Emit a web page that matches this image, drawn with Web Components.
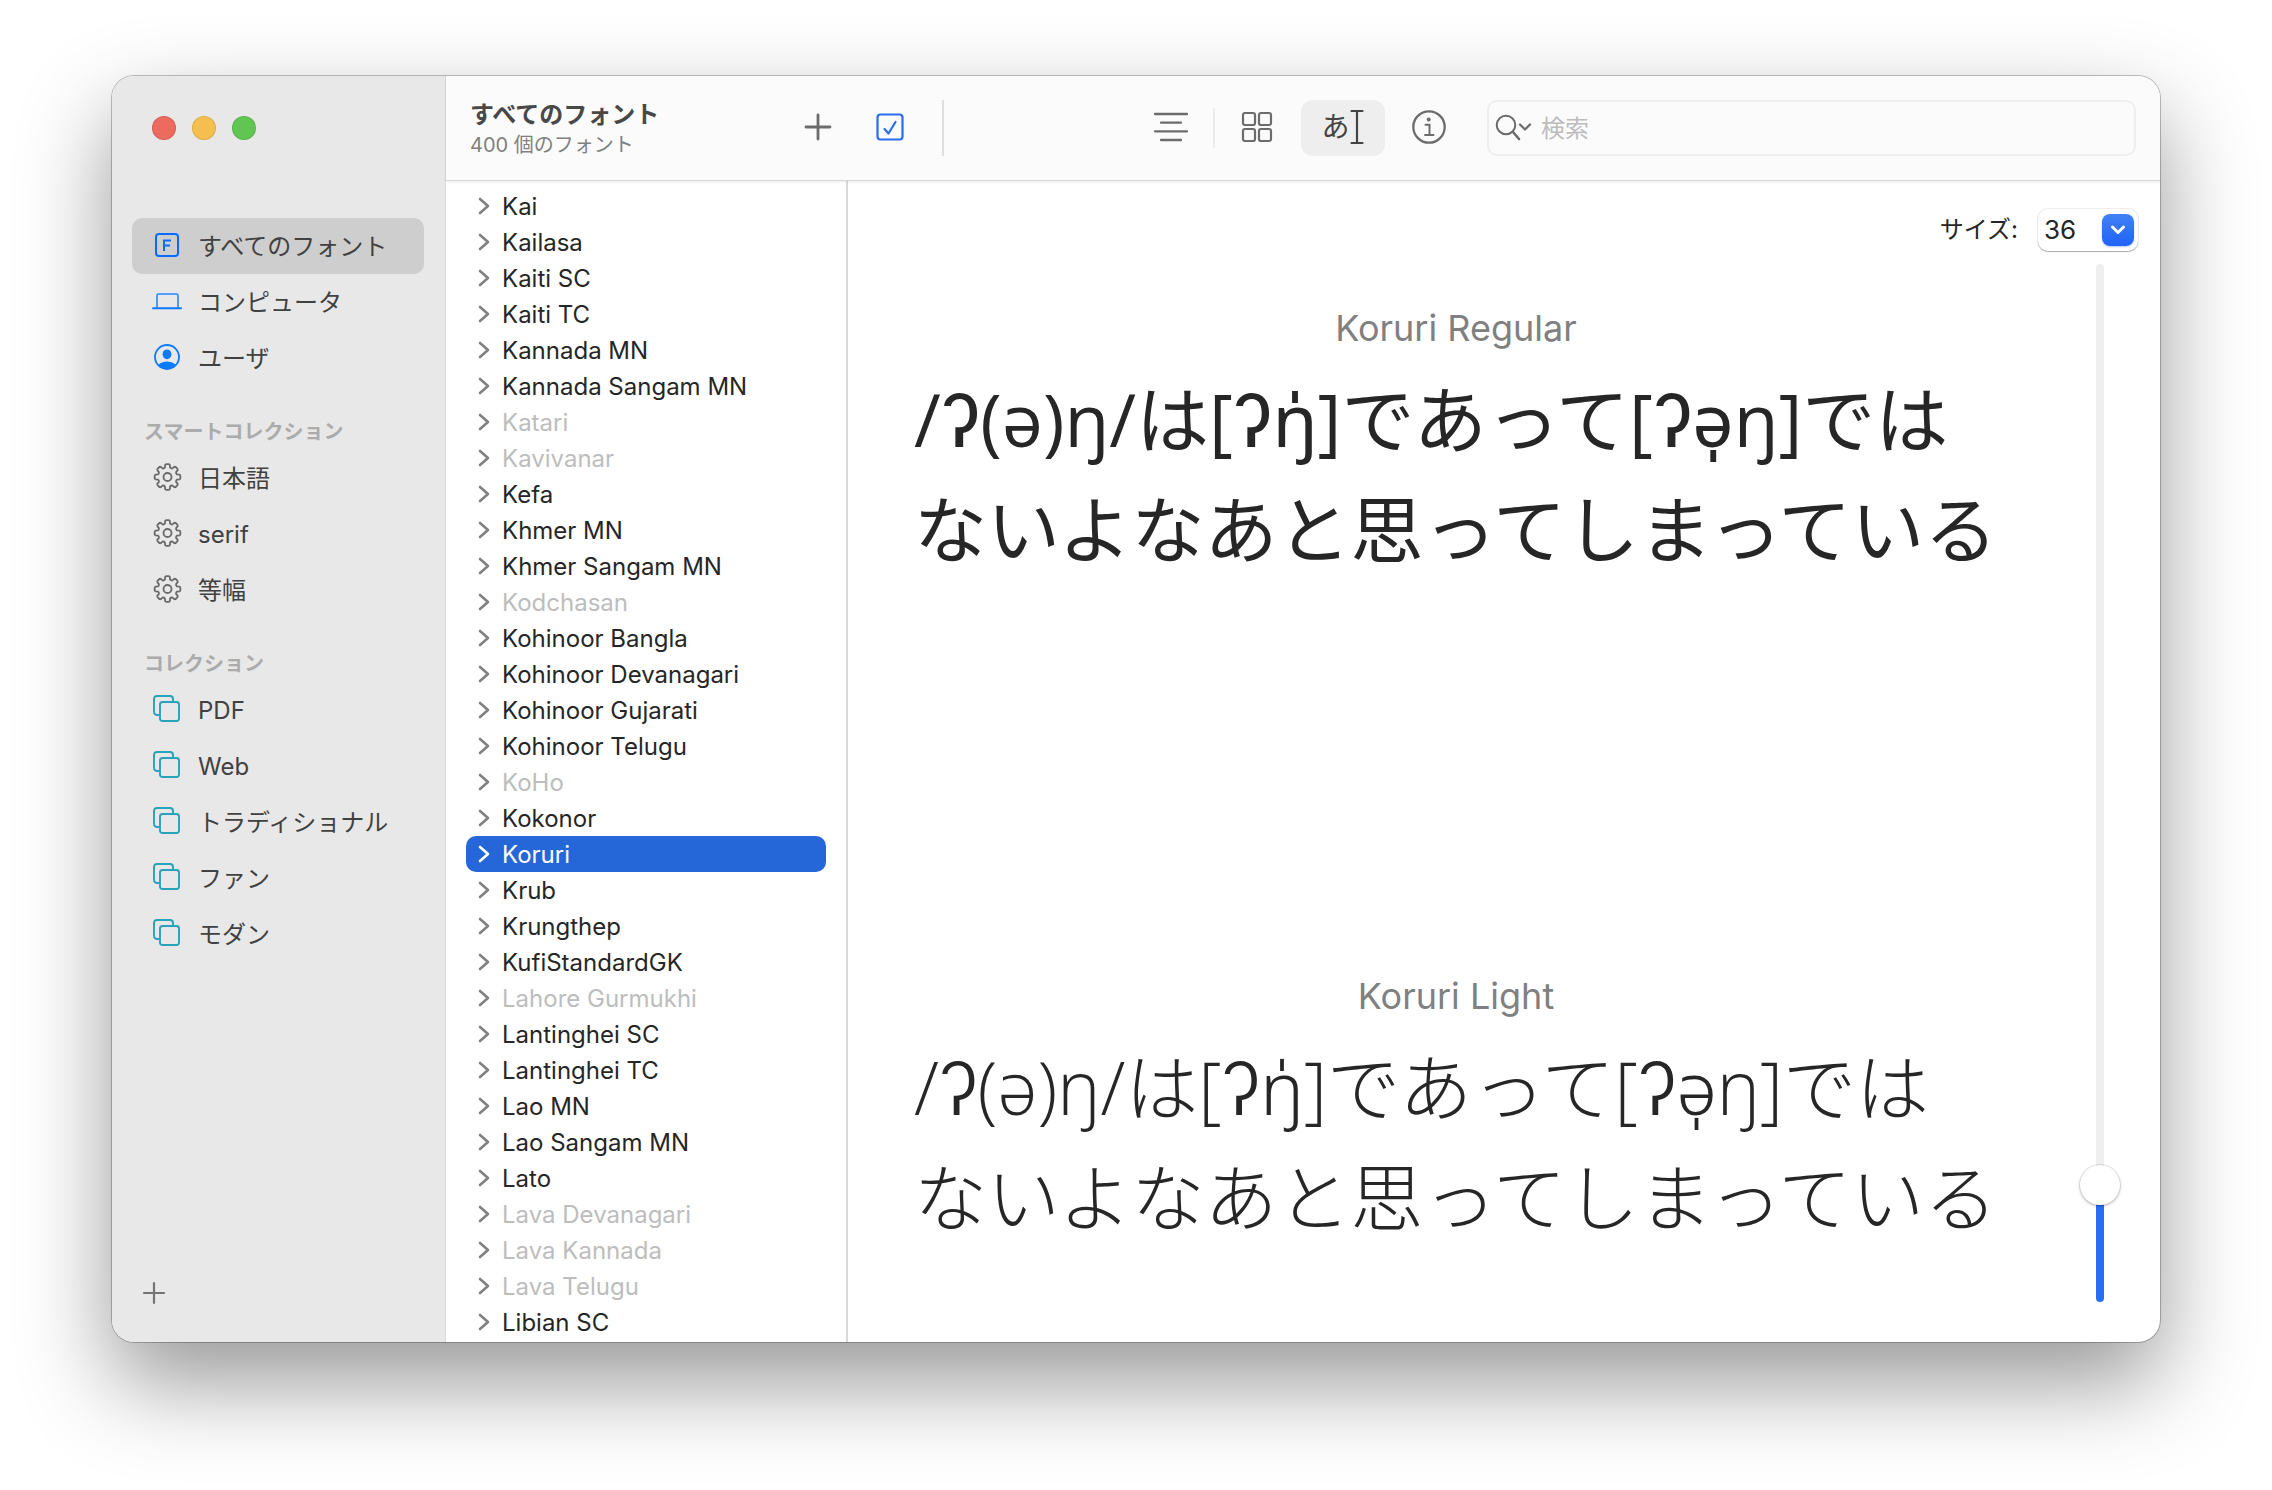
<!DOCTYPE html>
<html lang="ja">
<head>
<meta charset="utf-8">
<meta name="viewport" content="width=device-width, initial-scale=1">
<title>Font Book</title>
<style>
  html, body { margin: 0; background: #fff; }
  body {
    font-family: "Inter", "Noto Sans CJK JP", sans-serif;
    font-size: 24px;
    line-height: 32px;
    color: #262626;
  }
</style>
</head>
<body>
<fb-window>
  <fb-sidebar slot="sidebar"></fb-sidebar>
  <fb-toolbar slot="toolbar"></fb-toolbar>
  <fb-font-list slot="list"></fb-font-list>
  <fb-preview slot="preview">
    <fb-sample label="Koruri Regular" weight="400"></fb-sample>
    <fb-sample label="Koruri Light" weight="300"></fb-sample>
  </fb-preview>
</fb-window>

<script>
const define = (name, render) => customElements.define(name, class extends HTMLElement {
  connectedCallback() {
    if (this.shadowRoot) return;
    this.attachShadow({ mode: 'open' }).innerHTML = render(this);
  }
});

const BUTTON_RESET = `
  button { appearance: none; border: 0; margin: 0; padding: 0; background: none; font: inherit; color: inherit; text-align: left; }
`;

/* Each icon: [width, height, markup] */
const ICONS = {
  'font-box': [30, 30, `<g fill="none" stroke="#0a6cff" stroke-width="2"><rect x="4" y="4" width="22" height="22" rx="3"/><path d="M12 21V10.5h7M12 15.5h6"/></g>`],
  laptop: [30, 30, `<g fill="none" stroke="#2387ff" stroke-width="1.6"><path d="M5 22V9.5Q5 8 6.500 8h18Q26 8 26 9.500V22"/><path d="M1 22.300h28" stroke="#0a7aff" stroke-width="2" stroke-linecap="round"/></g>`],
  user: [30, 30, `<clipPath id="c"><circle cx="15" cy="15" r="12"/></clipPath><circle cx="15" cy="15" r="12" fill="none" stroke="#0a7aff" stroke-width="1.800"/><g fill="#0a7aff" clip-path="url(#c)"><ellipse cx="15" cy="12.300" rx="4.400" ry="4.900"/><ellipse cx="15" cy="25" rx="9" ry="5.500"/></g>`],
  copy: [30, 30, `<g fill="none" stroke="#27a3bb" stroke-width="1.900"><path d="M7.500 21H5.500Q2 21 2 18V5Q2 2 5 2H18Q21 2 21 5V8"/><rect x="8" y="8" width="19" height="19" rx="2.500"/></g>`],
  gear: [30, 30, `<g fill="none" stroke="#6a6a6a" stroke-width="1.800" stroke-linejoin="round"><circle cx="15.500" cy="15" r="4"/>GEAR</g>`],
  plus: [30, 30, `<path d="M15 3v24M3 15h24" stroke="#6c6c6c" stroke-width="2.800" stroke-linecap="round"/>`],
  'plus-small': [24, 24, `<path d="M12 2v20M2 12h20" stroke="#737373" stroke-width="2.200" stroke-linecap="round"/>`],
  check: [30, 30, `<rect x="2.500" y="2.500" width="25" height="25" rx="3" fill="none" stroke="#2a6cf0" stroke-width="2.200"/><path d="M9.500 17l4 4.500 7-11.500" fill="none" stroke="#2a6cf0" stroke-width="2.200" stroke-linecap="round" stroke-linejoin="round"/>`],
  lines: [36, 32, `<path d="M2 3h32M8 11.700h20M2 20.300h32M8 29h20" stroke="#6c6c6c" stroke-width="2.300" stroke-linecap="round"/>`],
  grid: [32, 32, `<g fill="none" stroke="#6c6c6c" stroke-width="2.200"><rect x="2" y="2" width="12" height="12" rx="2"/><rect x="18" y="2" width="12" height="12" rx="2"/><rect x="2" y="18" width="12" height="12" rx="2"/><rect x="18" y="18" width="12" height="12" rx="2"/></g>`],
  ibeam: [14, 36, `<path d="M1.500 2h11M1.500 34h11M7 2v32" fill="none" stroke="#444" stroke-width="2.200" stroke-linecap="round"/>`],
  info: [36, 36, `<circle cx="18" cy="18" r="15.700" fill="none" stroke="#6c6c6c" stroke-width="2.300"/><circle cx="17.700" cy="10.500" r="2" fill="#6c6c6c"/><path d="M14.500 15.700h4v10.300M14 26h8.500" fill="none" stroke="#6c6c6c" stroke-width="2" stroke-linecap="round"/>`],
  search: [38, 30, `<g fill="none" stroke="#6c6c6c" stroke-linecap="round" stroke-linejoin="round"><circle cx="11" cy="12" r="9.300" stroke-width="2"/><path d="M18 19l6 7" stroke-width="2.600"/><path d="M25 11.500l5 5 5-5" stroke-width="2.300"/></g>`],
  chevron: [12, 18, `<path d="M2 2l8 7-8 7" fill="none" stroke="currentColor" stroke-width="2.600" stroke-linecap="round" stroke-linejoin="round"/>`],
};

/* Eight-toothed cog outline */
ICONS.gear[2] = ICONS.gear[2].replace('GEAR', () => {
  const at = (r, deg) => {
    const a = deg * Math.PI / 180;
    return (15.5 + r * Math.cos(a)).toFixed(2) + ' ' + (15 + r * Math.sin(a)).toFixed(2);
  };
  let d = '';
  for (let i = 0; i < 8; i++) {
    const m = i * 45;
    d += (i ? 'L' : 'M') + at(9.9, m - 15) + 'L' + at(12.3, m - 11) + 'Q' + at(13, m - 8) + ' ' + at(12.9, m - 4)
       + 'L' + at(12.9, m + 4) + 'Q' + at(13, m + 8) + ' ' + at(12.3, m + 11) + 'L' + at(9.9, m + 15)
       + 'Q' + at(9, m + 22.5) + ' ' + at(9.9, m + 30);
  }
  return `<path d="${d}Z"/>`;
});

define('fb-icon', el => {
  const [w, h, body] = ICONS[el.getAttribute('name')];
  return `<style>:host{display:block;flex:none} svg{display:block}</style>
    <svg width="${w}" height="${h}" viewBox="0 0 ${w} ${h}" aria-hidden="true">${body}</svg>`;
});

define('fb-window', () => `
  <style>
    :host { display: flex; box-sizing: border-box; height: 100vh; padding: 76px 112px 148px; }
    .frame {
      flex: 1; min-width: 0; display: flex; overflow: hidden;
      border-radius: 22px; background: #fff;
      box-shadow: 0 0 0 1px rgba(0,0,0,.24), 0 40px 92px rgba(0,0,0,.41);
    }
    ::slotted([slot=sidebar]) { flex: 0 0 333px; border-right: 1px solid #dadada; }
    .main { flex: 1; min-width: 0; display: flex; flex-direction: column; }
    .panes { flex: 1; min-height: 0; display: flex; }
    ::slotted([slot=list]) { flex: 0 0 400px; border-right: 2px solid #d9d9d9; }
    ::slotted([slot=preview]) { flex: 1; min-width: 0; }
  </style>
  <div class="frame">
    <slot name="sidebar"></slot>
    <div class="main">
      <slot name="toolbar"></slot>
      <div class="panes"><slot name="list"></slot><slot name="preview"></slot></div>
    </div>
  </div>`);

define('fb-side-item', el => `
  <style>
    ${BUTTON_RESET}
    :host { display: block; }
    button {
      display: flex; align-items: center; gap: 16px; width: 100%; height: 56px;
      padding: 0 20px; border-radius: 10px; color: #414141; white-space: nowrap;
    }
    :host([selected]) button { background: #cecece; }
    fb-icon { padding-bottom: 2px; }
    .text { padding-top: 2px; }
  </style>
  <button type="button"><fb-icon name="${el.getAttribute('icon')}"></fb-icon><span class="text"><slot></slot></span></button>`);

define('fb-sidebar', () => {
  const group = (icon, names) => names.map(n => `<fb-side-item icon="${icon}">${n}</fb-side-item>`).join('');
  return `
  <style>
    ${BUTTON_RESET}
    :host { display: flex; flex-direction: column; background: #e8e8e8; }
    .lights { display: flex; gap: 16px; padding: 40px 40px 0; margin-bottom: 78px; }
    .lights button { width: 24px; height: 24px; border-radius: 50%; box-shadow: inset 0 0 0 1px rgba(0,0,0,.1); }
    .red { background: #ec6a5e; } .yellow { background: #f5bf4f; } .green { background: #61c554; }
    nav { flex: 1; padding: 0 21px 0 20px; }
    h2 { margin: 0; padding: 30px 12px 2px; font-size: 20px; line-height: 32px; font-weight: 600; color: #ababab; }
    .add { margin: 0 0 37px 30px; align-self: flex-start; }
  </style>
  <div class="lights">
    <button type="button" class="red" aria-label="閉じる"></button>
    <button type="button" class="yellow" aria-label="しまう"></button>
    <button type="button" class="green" aria-label="拡大"></button>
  </div>
  <nav>
    <fb-side-item icon="font-box" selected>すべてのフォント</fb-side-item>
    <fb-side-item icon="laptop">コンピュータ</fb-side-item>
    <fb-side-item icon="user">ユーザ</fb-side-item>
    <h2>スマートコレクション</h2>
    ${group('gear', ['日本語', 'serif', '等幅'])}
    <h2>コレクション</h2>
    ${group('copy', ['PDF', 'Web', 'トラディショナル', 'ファン', 'モダン'])}
  </nav>
  <button type="button" class="add" aria-label="コレクションを追加"><fb-icon name="plus-small"></fb-icon></button>`;
});

define('fb-toolbar', () => `
  <style>
    ${BUTTON_RESET}
    :host {
      display: flex; align-items: center; height: 104px; flex: none; padding: 0 24px;
      background: #fbfbfb; border-bottom: 1px solid #d6d6d6; position: relative;
      box-shadow: 0 1px 3px rgba(0,0,0,.08);
    }
    .title { flex: 0 0 312px; padding-top: 2px; }
    h1 { margin: 0; font-size: 24px; line-height: 32px; font-weight: 700; color: #484848; }
    p { margin: 0; font-size: 20px; line-height: 28px; color: #808080; }
    button { display: flex; align-items: center; justify-content: center; flex: none; box-sizing: border-box; width: 72px; height: 56px; padding-bottom: 2px; border-radius: 12px; }
    .active { width: 84px; background: #eee; margin: 0 8px; gap: 1px; color: #444; font-size: 28px; }
    .sep { flex: none; width: 2px; height: 56px; margin: 0 16px; background: #dedede; }
    .sep.short { height: 40px; margin: 0 6px; background: #ececec; }
    .space { flex: 19 1 0; margin-left: -16px; }
    .search {
      flex: 63 1 0; min-width: 0; box-sizing: border-box; height: 56px; margin-left: 22px;
      display: flex; align-items: center; gap: 8px; padding: 0 6px; border: 2px solid #eee; border-radius: 10px;
    }
    input { flex: 1; min-width: 0; border: 0; outline: 0; padding: 2px 0 0; background: none; font: inherit; color: #262626; }
    input::placeholder { color: #bcbcbc; opacity: 1; }
  </style>
  <div class="title"><h1>すべてのフォント</h1><p>400 個のフォント</p></div>
  <button type="button" aria-label="追加"><fb-icon name="plus"></fb-icon></button>
  <button type="button" aria-label="使用"><fb-icon name="check"></fb-icon></button>
  <span class="sep"></span>
  <span class="space"></span>
  <button type="button" aria-label="サンプル"><fb-icon name="lines"></fb-icon></button>
  <span class="sep short"></span>
  <button type="button" aria-label="レパートリー"><fb-icon name="grid"></fb-icon></button>
  <button type="button" class="active">あ<fb-icon name="ibeam"></fb-icon></button>
  <button type="button" aria-label="情報"><fb-icon name="info"></fb-icon></button>
  <label class="search"><fb-icon name="search"></fb-icon><input type="text" placeholder="検索" aria-label="検索"></label>`);

define('fb-font-row', () => `
  <style>
    ${BUTTON_RESET}
    :host { display: block; --arrow: #808080; }
    :host([off]) { color: #bdbdbd; }
    :host([selected]) { color: #fff; --arrow: #fff; }
    button { display: flex; align-items: center; gap: 12px; width: 100%; height: 36px; padding: 0 12px; border-radius: 10px; white-space: nowrap; }
    :host([selected]) button { background: #2566d9; }
    fb-icon { color: var(--arrow); }
    .text { padding-top: 2px; }
  </style>
  <button type="button"><fb-icon name="chevron"></fb-icon><span class="text"><slot></slot></span></button>`);

define('fb-font-list', () => {
  /* A leading "-" marks a font that is not downloaded, "*" the selected one */
  const names = ['Kai', 'Kailasa', 'Kaiti SC', 'Kaiti TC', 'Kannada MN', 'Kannada Sangam MN', '-Katari', '-Kavivanar',
    'Kefa', 'Khmer MN', 'Khmer Sangam MN', '-Kodchasan', 'Kohinoor Bangla', 'Kohinoor Devanagari', 'Kohinoor Gujarati',
    'Kohinoor Telugu', '-KoHo', 'Kokonor', '*Koruri', 'Krub', 'Krungthep', 'KufiStandardGK', '-Lahore Gurmukhi',
    'Lantinghei SC', 'Lantinghei TC', 'Lao MN', 'Lao Sangam MN', 'Lato', '-Lava Devanagari', '-Lava Kannada',
    '-Lava Telugu', 'Libian SC'];
  const state = { '-': 'off', '*': 'selected' };
  return `
  <style>:host { display: block; overflow: hidden; } .rows { padding: 7px 20px 0; }</style>
  <div class="rows">${names.map(n => `<fb-font-row ${state[n[0]] || ''}>${n.replace(/^[-*]/, '')}</fb-font-row>`).join('')}</div>`;
});

define('fb-sample', el => `
  <style>
    :host { display: block; flex: none; height: 668px; }
    h2 { margin: 0 0 12px; text-align: center; font-size: 36px; line-height: 48px; font-weight: 400; color: #808080; }
    p {
      margin: 0 0 0 66px; font-family: "Open Sans", "Inter", "Noto Sans", "Noto Sans CJK JP", sans-serif; font-size: 73px; line-height: 110px;
      font-weight: ${el.getAttribute('weight')}; color: #262626; white-space: nowrap;
    }
  </style>
  <h2>${el.getAttribute('label')}</h2>
  <p>/ʔ(ə)ŋ/は[ʔŋ̍]であって[ʔə̩ŋ]では<br>ないよなあと思ってしまっている</p>`);

define('fb-preview', () => `
  <style>
    :host { display: flex; flex-direction: column; overflow: hidden; }
    .size { display: flex; justify-content: flex-end; align-items: center; gap: 20px; padding: 28px 22px 13px; }
    .combo {
      display: grid; width: 100px; height: 42px; align-items: center; border-radius: 10px; background: #fff;
      box-shadow: 0 0 0 1px rgba(0,0,0,.07), 0 1px 1px rgba(0,0,0,.28);
    }
    .combo > * { grid-area: 1 / 1; }
    select {
      appearance: none; border: 0; outline: 0; background: none; margin: 0; padding: 0 0 0 6px;
      font: inherit; font-size: 26px; line-height: 42px; height: 42px; color: #262626;
    }
    .arrow {
      justify-self: end; margin-right: 4px; width: 32px; height: 32px; border-radius: 8px; pointer-events: none;
      display: grid; place-items: center; background: linear-gradient(#4180f6, #2163f6); box-shadow: 0 1px 2px rgba(33,99,246,.35);
    }
    .body { flex: 1; min-height: 0; display: flex; padding: 0 40px 40px 0; gap: 16px; }
    .samples { flex: 1; min-width: 0; padding-top: 40px; display: flex; flex-direction: column; }
    .slider { flex: none; display: flex; }
    input {
      appearance: none; writing-mode: vertical-lr; direction: rtl; flex: none; width: 40px; margin: 0;
      background: none; outline: 0;
    }
    input::-webkit-slider-runnable-track {
      width: 8px; border-radius: 4px; background: linear-gradient(to top, #2a6df5 11%, #efefef 11%);
    }
    input::-webkit-slider-thumb {
      appearance: none; width: 40px; height: 40px; margin-left: -16px; border-radius: 50%; background: #fff;
      box-shadow: 0 0 0 1px rgba(0,0,0,.07), 0 1px 3px rgba(0,0,0,.3);
    }
  </style>
  <div class="size">
    <label for="size">サイズ:</label>
    <div class="combo">
      <select id="size"><option>24</option><option selected>36</option><option>48</option></select>
      <span class="arrow"><svg width="16" height="12" viewBox="0 0 16 12" aria-hidden="true"><path d="M2.500 3l5.500 5.500 5.500-5.500" fill="none" stroke="#fff" stroke-width="3" stroke-linecap="round" stroke-linejoin="round"/></svg></span>
    </div>
  </div>
  <div class="body">
    <div class="samples"><slot></slot></div>
    <div class="slider"><input type="range" min="9" max="288" value="36" aria-label="サイズ"></div>
  </div>`);
</script>
</body>
</html>
